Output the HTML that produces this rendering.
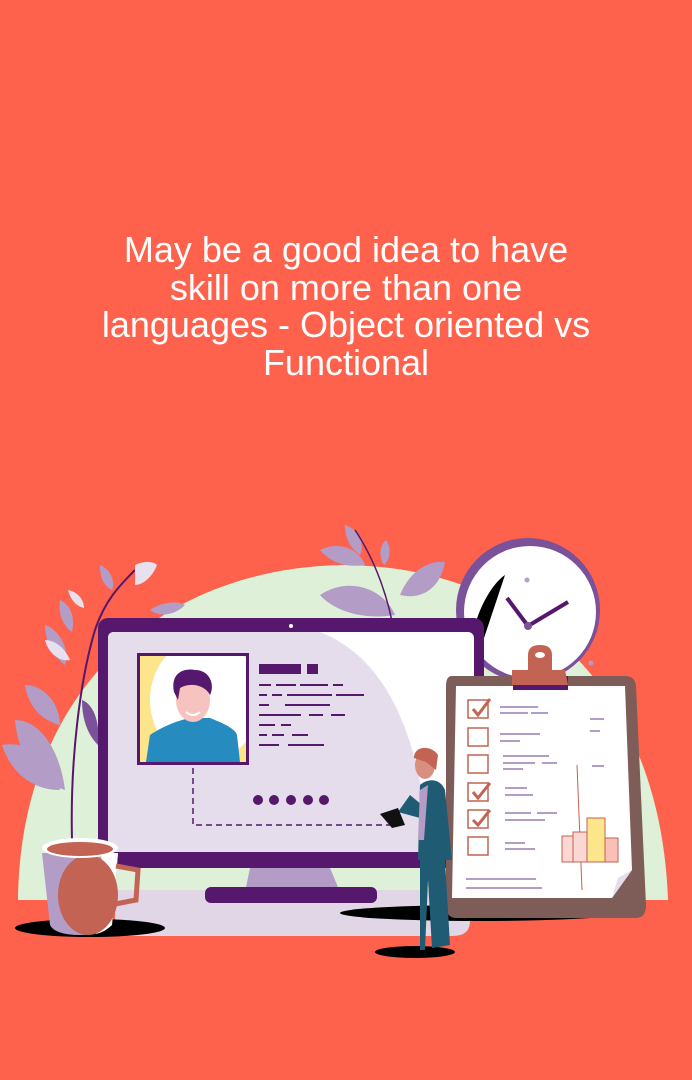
<!DOCTYPE html>
<html><head><meta charset="utf-8"><style>
html,body{margin:0;padding:0}
body{width:692px;height:1080px;background:#FE614C;position:relative;overflow:hidden;font-family:"Liberation Sans",sans-serif}
.t{position:absolute;top:231px;left:0;width:692px;text-align:center;color:#fff;font-size:36px;line-height:37.5px}
svg{position:absolute;left:0;top:0}
</style></head><body>
<div class="t">May be a good idea to have<br>skill on more than one<br>languages - Object oriented vs<br>Functional</div>
<svg width="692" height="1080" viewBox="0 0 692 1080">
<defs><clipPath id="ph"><rect x="140" y="656" width="106" height="106"/></clipPath></defs>
<path d="M18 900 C20 700 150 570 340 565 C520 565 660 680 668 900 Z" fill="#DEF0D8"/>
<g fill="#B39CC6"><path d="M320 595 C350 575 385 590 395 615 C365 620 335 612 320 595Z"/><path d="M400 595 C410 570 430 560 445 562 C440 590 420 600 400 595Z"/><path d="M320 550 C340 540 360 550 365 565 C345 568 330 562 320 550Z"/><path d="M345 525 C360 530 365 545 360 555 C350 548 345 538 345 525Z"/><path d="M386 540 C392 548 390 560 384 565 C378 556 380 545 386 540Z"/></g>
<path d="M395 640 C390 600 375 560 355 530" stroke="#55186D" stroke-width="1.5" fill="none"/>
<path d="M72 840 C70 760 80 680 95 630 C105 600 120 585 135 570" stroke="#55186D" stroke-width="2" fill="none"/>
<g fill="#B39CC6"><path d="M15 720 C40 720 60 750 65 790 C35 780 18 755 15 720Z"/><path d="M2 745 C30 740 55 760 60 790 C30 790 10 770 2 745Z"/><path d="M25 685 C45 685 60 705 60 725 C40 720 28 705 25 685Z"/><path d="M45 625 C60 630 70 650 65 665 C52 655 45 640 45 625Z"/><path d="M60 600 C72 605 75 620 72 632 C62 625 58 612 60 600Z"/><path d="M100 565 C112 570 115 583 112 590 C102 585 100 575 100 565Z"/><path d="M150 610 C165 600 180 602 185 605 C175 615 160 618 150 610Z"/></g>
<g fill="#E8E0EE"><path d="M135 565 C145 560 155 562 157 565 C152 578 142 585 135 585Z"/><path d="M45 640 C55 640 65 648 70 660 C58 662 48 652 45 640Z"/><path d="M68 590 C78 592 84 600 84 608 C75 606 70 598 68 590Z"/></g>
<g fill="#7B519A"><path d="M82 700 C95 705 100 725 98 745 C88 735 82 720 82 700Z"/></g>
<circle cx="528" cy="610" r="72" fill="#7B519A"/>
<circle cx="530" cy="612" r="66" fill="#fff"/>
<path d="M470 660 C470 620 490 585 505 575 L480 650Z" fill="#000"/>
<line x1="528" y1="626" x2="507" y2="598" stroke="#55186D" stroke-width="4"/>
<line x1="528" y1="626" x2="568" y2="602" stroke="#55186D" stroke-width="4"/>
<circle cx="528" cy="626" r="4" fill="#7B519A"/>
<circle cx="527" cy="580" r="2.5" fill="#B39CC6"/><circle cx="591" cy="663" r="2.5" fill="#B39CC6"/>
<path d="M115 890 L470 890 L470 920 C470 935 460 936 450 936 L130 936 C118 936 115 930 115 920Z" fill="#E0D6E6"/>
<rect x="98" y="618" width="386" height="250" rx="10" fill="#55186D"/>
<rect x="108" y="632" width="366" height="220" rx="6" fill="#fff"/>
<path d="M108 638 Q108 632 114 632 L320 632 C390 660 420 740 430 852 L108 852Z" fill="#E5DDEB"/>
<circle cx="291" cy="626" r="2" fill="#fff"/>
<path d="M250 868 L330 868 L340 892 L245 892Z" fill="#B39CC6"/>
<rect x="205" y="887" width="172" height="16" rx="6" fill="#55186D"/>
<rect x="137" y="653" width="112" height="112" fill="#55186D"/>
<rect x="140" y="656" width="106" height="106" fill="#FCE58A"/>
<g clip-path="url(#ph)">
<ellipse cx="205" cy="700" rx="55" ry="62" fill="#fff"/>
<path d="M146 762 L150 735 C165 725 180 720 190 718 L210 718 C220 722 235 728 237 735 L240 762Z" fill="#268BBF"/>
<ellipse cx="193" cy="700" rx="17" ry="22" fill="#F7C3BE"/>
<path d="M174 692 C170 672 185 668 195 670 C210 670 215 685 210 695 C205 685 190 682 180 688 L178 700Z" fill="#55186D"/>
<path d="M186 712 Q193 718 200 712" stroke="#fff" stroke-width="2" fill="none"/>
</g>
<g fill="#55186D"><rect x="259" y="664" width="42" height="10"/><rect x="307" y="664" width="11" height="10"/>
<rect x="259" y="684" width="12" height="2"/><rect x="276" y="684" width="20" height="2"/><rect x="300" y="684" width="28" height="2"/><rect x="333" y="684" width="10" height="2"/>
<rect x="259" y="694" width="8" height="2"/><rect x="272" y="694" width="10" height="2"/><rect x="287" y="694" width="45" height="2"/><rect x="336" y="694" width="28" height="2"/>
<rect x="259" y="704" width="10" height="2"/><rect x="285" y="704" width="45" height="2"/>
<rect x="259" y="714" width="42" height="2"/><rect x="309" y="714" width="14" height="2"/><rect x="331" y="714" width="14" height="2"/>
<rect x="259" y="724" width="16" height="2"/><rect x="281" y="724" width="10" height="2"/>
<rect x="259" y="734" width="8" height="2"/><rect x="272" y="734" width="12" height="2"/><rect x="292" y="734" width="16" height="2"/>
<rect x="259" y="744" width="20" height="2"/><rect x="288" y="744" width="36" height="2"/>
<circle cx="258" cy="800" r="5"/><circle cx="274" cy="800" r="5"/><circle cx="291" cy="800" r="5"/><circle cx="308" cy="800" r="5"/><circle cx="324" cy="800" r="5"/></g>
<path d="M193 768 L193 825 L390 825" stroke="#55186D" stroke-width="1.5" stroke-dasharray="6 4" fill="none"/>
<ellipse cx="480" cy="913" rx="140" ry="8" fill="#000"/>
<ellipse cx="90" cy="928" rx="75" ry="9" fill="#000"/>
<ellipse cx="415" cy="952" rx="40" ry="6" fill="#000"/>
<path d="M452 676 L625 676 Q635 676 636 686 L646 905 Q646 918 636 918 L456 918 Q446 918 446 905 L446 686 Q446 676 452 676Z" fill="#7E5D59"/>
<path d="M456 686 L625 686 L632 870 L612 898 L452 898Z" fill="#fff"/>
<path d="M612 898 L632 870 L618 878Z" fill="#E5DDEB"/>
<path d="M513 676 L568 676 L568 690 L513 690Z" fill="#55186D"/>
<path d="M512 670 L565 670 L568 685 L512 685Z" fill="#C26353"/>
<path d="M528 655 Q528 645 540 645 Q552 645 552 655 L552 672 L528 672Z" fill="#C26353"/>
<ellipse cx="540" cy="655" rx="5" ry="3" fill="#fff"/>
<g stroke="#C26353" stroke-width="1.5" fill="none">
<rect x="468" y="700" width="20" height="18"/><rect x="468" y="728" width="20" height="18"/><rect x="468" y="755" width="20" height="18"/><rect x="468" y="783" width="20" height="18"/><rect x="468" y="810" width="20" height="18"/><rect x="468" y="837" width="20" height="18"/>
<path d="M473 709 L478 715 L490 699" stroke-width="3"/><path d="M473 792 L478 798 L490 783" stroke-width="3"/><path d="M473 820 L478 825 L490 810" stroke-width="3"/>
<line x1="577" y1="765" x2="582" y2="890" stroke-width="1"/></g>
<g fill="#B39CC6"><rect x="500" y="706" width="38" height="2"/><rect x="500" y="712" width="28" height="2"/><rect x="531" y="712" width="17" height="2"/>
<rect x="500" y="733" width="40" height="2"/><rect x="500" y="740" width="20" height="2"/>
<rect x="503" y="755" width="46" height="2"/><rect x="503" y="762" width="32" height="2"/><rect x="542" y="762" width="15" height="2"/><rect x="503" y="768" width="20" height="2"/>
<rect x="505" y="787" width="22" height="2"/><rect x="505" y="794" width="28" height="2"/>
<rect x="505" y="812" width="26" height="2"/><rect x="537" y="812" width="20" height="2"/><rect x="505" y="819" width="40" height="2"/>
<rect x="505" y="842" width="20" height="2"/><rect x="505" y="848" width="30" height="2"/>
<rect x="590" y="718" width="14" height="2"/><rect x="590" y="730" width="10" height="2"/><rect x="592" y="765" width="12" height="2"/>
<rect x="466" y="878" width="70" height="2"/><rect x="466" y="887" width="76" height="2"/></g>
<rect x="562" y="836" width="11" height="26" fill="#FAD7D3" stroke="#C26353" stroke-width="1"/>
<rect x="573" y="832" width="14" height="30" fill="#FAD7D3" stroke="#C26353" stroke-width="1"/>
<rect x="587" y="818" width="18" height="44" fill="#FCE58A" stroke="#C26353" stroke-width="1"/>
<rect x="605" y="838" width="13" height="24" fill="#FAC0B8" stroke="#C26353" stroke-width="1"/>
<path d="M420 860 L445 860 L450 945 L432 948 L428 880 L425 950 L420 950Z" fill="#1F5C73"/>
<path d="M420 785 C428 778 440 778 445 790 L452 860 L418 860 Z" fill="#1F5C73"/>
<path d="M410 795 L428 810 L420 818 L398 812Z" fill="#1F5C73"/>
<path d="M420 790 L428 785 L424 840 L418 840Z" fill="#B39CC6"/>
<ellipse cx="425" cy="765" rx="10" ry="14" fill="#D98F80"/>
<path d="M414 758 C414 745 432 745 438 755 L436 770 L426 762 Z" fill="#C26353"/>
<path d="M380 814 L398 808 L405 825 L392 828Z" fill="#111"/>
<path d="M42 853 L118 853 L112 925 Q100 935 80 935 Q55 935 50 925Z" fill="#B39CC6"/>
<path d="M100 853 L118 853 L112 925 Q105 932 96 934 C110 900 105 870 100 853Z" fill="#fff"/>
<ellipse cx="88" cy="895" rx="30" ry="40" fill="#C26353"/>
<path d="M116 866 L138 870 L136 900 L110 905" stroke="#C26353" stroke-width="5" fill="none"/>
<ellipse cx="80" cy="848" rx="38" ry="10" fill="#fff"/>
<ellipse cx="80" cy="849" rx="33" ry="7" fill="#C26353"/>
</svg>
</body></html>
